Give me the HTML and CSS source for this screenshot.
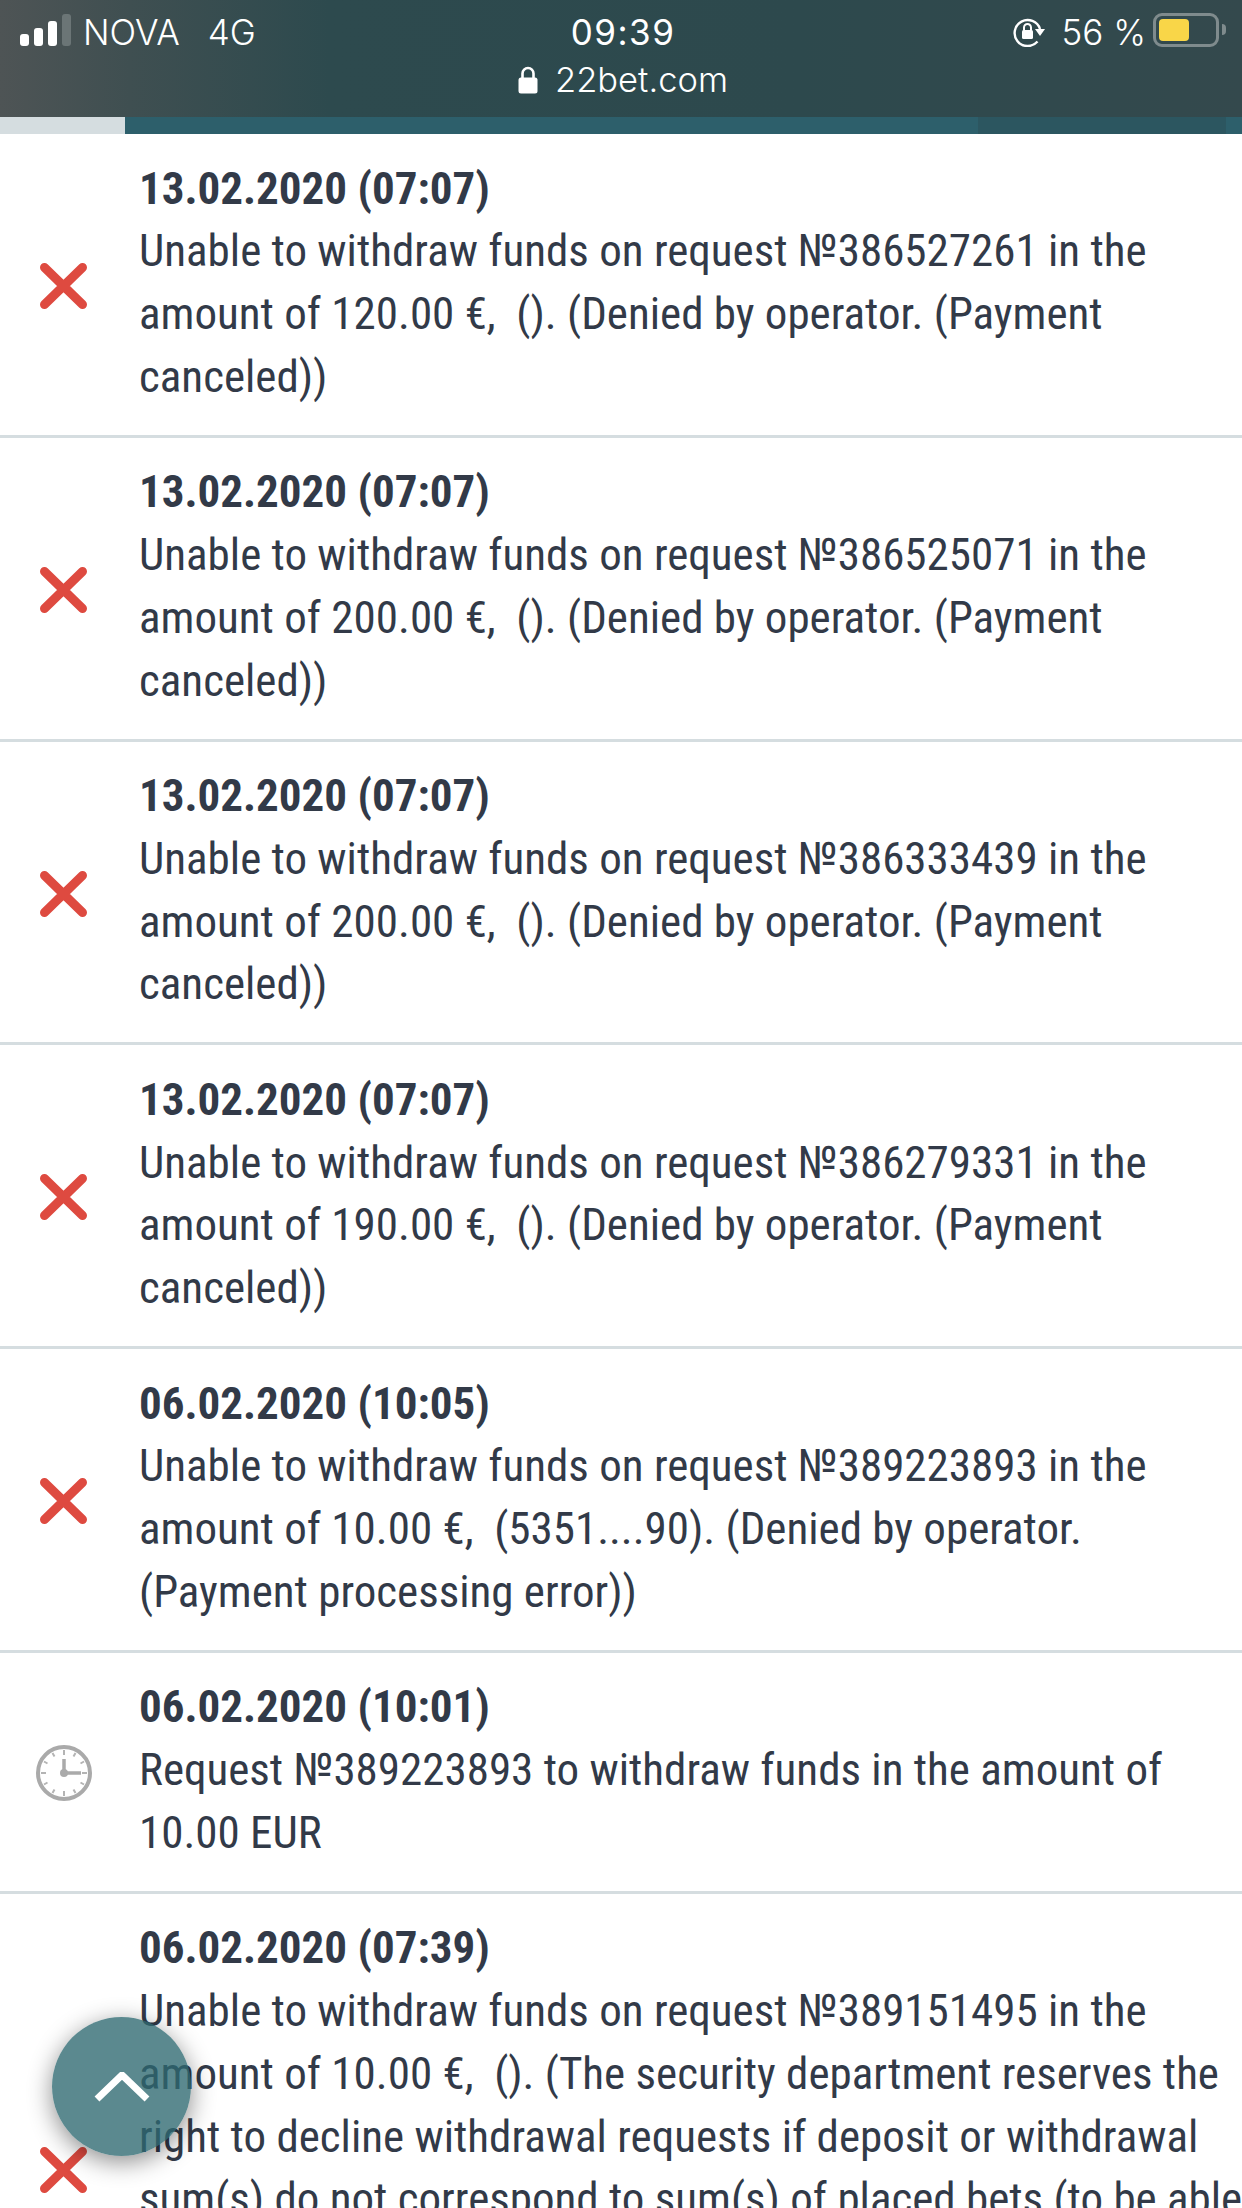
FILE: index.html
```html
<!DOCTYPE html>
<html lang="en">
<head>
    <meta charset="UTF-8">
    <meta name="viewport" content="width=device-width, initial-scale=1.0">
    <title>22bet.com</title>
    <link rel="stylesheet" href="styles.css">
</head>
<body>
    <header class="statusbar">
        <div class="status-left">
            <div class="signal">
                <span class="bar bar1"></span>
                <span class="bar bar2"></span>
                <span class="bar bar3"></span>
                <span class="bar bar4"></span>
            </div>
            <span class="carrier">NOVA</span>
            <span class="network">4G</span>
        </div>
        <div class="status-center">
            <div class="time">09:39</div>
            <div class="url">
                <svg class="url-lock" viewBox="0 0 20 28"><path d="M4.5 13V7.5a5.5 5.5 0 0 1 11 0V13" fill="none" stroke="#fff" stroke-width="2.6"/><rect x="0.5" y="11.5" width="19" height="16" rx="2.5" fill="#fff"/></svg>
                <span>22bet.com</span>
            </div>
        </div>
        <div class="status-right">
            <svg class="rotation" viewBox="0 0 32 30"><path d="M24.5 24.5A13 13 0 1 1 27 12" fill="none" stroke="#fff" stroke-width="2.4"/><path d="M22 12h10l-5 7z" fill="#fff"/><path d="M11 13.500V10.500a3.500 3.500 0 0 1 7 0V13.500" fill="none" stroke="#fff" stroke-width="2"/><rect x="9" y="13" width="11" height="9" rx="1.500" fill="#fff"/></svg>
            <span class="percent">56 %</span>
            <div class="battery"><div class="battery-fill"></div></div>
            <div class="battery-nub"></div>
        </div>
    </header>
    <div class="strip">
        <div class="strip-light"></div>
        <div class="strip-main"></div>
        <div class="strip-dark"></div>
        <div class="strip-end"></div>
    </div>

    <main class="list">
        <div class="row">
            <div class="row-icon"><svg class="icon-x" viewBox="0 0 47 46"><path d="M4.500 4.500l38 37M42.500 4.500l-38 37" /></svg></div>
            <div class="row-text">
                <div class="date">13.02.2020 (07:07)</div>
                <div class="line">Unable to withdraw funds on request №386527261 in the</div>
                <div class="line">amount of 120.00 €,&nbsp; (). (Denied by operator. (Payment</div>
                <div class="line">canceled))</div>
            </div>
        </div>
        <div class="row">
            <div class="row-icon"><svg class="icon-x" viewBox="0 0 47 46"><path d="M4.500 4.500l38 37M42.500 4.500l-38 37" /></svg></div>
            <div class="row-text">
                <div class="date">13.02.2020 (07:07)</div>
                <div class="line">Unable to withdraw funds on request №386525071 in the</div>
                <div class="line">amount of 200.00 €,&nbsp; (). (Denied by operator. (Payment</div>
                <div class="line">canceled))</div>
            </div>
        </div>
        <div class="row">
            <div class="row-icon"><svg class="icon-x" viewBox="0 0 47 46"><path d="M4.500 4.500l38 37M42.500 4.500l-38 37" /></svg></div>
            <div class="row-text">
                <div class="date">13.02.2020 (07:07)</div>
                <div class="line">Unable to withdraw funds on request №386333439 in the</div>
                <div class="line">amount of 200.00 €,&nbsp; (). (Denied by operator. (Payment</div>
                <div class="line">canceled))</div>
            </div>
        </div>
        <div class="row">
            <div class="row-icon"><svg class="icon-x" viewBox="0 0 47 46"><path d="M4.500 4.500l38 37M42.500 4.500l-38 37" /></svg></div>
            <div class="row-text">
                <div class="date">13.02.2020 (07:07)</div>
                <div class="line">Unable to withdraw funds on request №386279331 in the</div>
                <div class="line">amount of 190.00 €,&nbsp; (). (Denied by operator. (Payment</div>
                <div class="line">canceled))</div>
            </div>
        </div>
        <div class="row">
            <div class="row-icon"><svg class="icon-x" viewBox="0 0 47 46"><path d="M4.500 4.500l38 37M42.500 4.500l-38 37" /></svg></div>
            <div class="row-text">
                <div class="date">06.02.2020 (10:05)</div>
                <div class="line">Unable to withdraw funds on request №389223893 in the</div>
                <div class="line">amount of 10.00 €,&nbsp; (5351....90). (Denied by operator.</div>
                <div class="line">(Payment processing error))</div>
            </div>
        </div>
        <div class="row">
            <div class="row-icon">
                <svg class="icon-clock" viewBox="0 0 56 56">
                    <circle cx="28" cy="28" r="26" fill="none" stroke="#aaa" stroke-width="4"/>
                    <path d="M28 5v5M28 46v5M5 28h5M46 28h5M16.500 8l2 3.500M39.500 8l-2 3.500M8 16.500l3.500 2M48 16.500l-3.500 2M8 39.500l3.500-2M48 39.500l-3.500-2M16.500 48l2-3.500M39.500 48l-2-3.500" stroke="#b4b4b4" stroke-width="2"/>
                    <path d="M28 14v14h17" fill="none" stroke="#aaa" stroke-width="3.500"/>
                    <circle cx="28" cy="28" r="4" fill="#aaa"/>
                </svg>
            </div>
            <div class="row-text">
                <div class="date">06.02.2020 (10:01)</div>
                <div class="line">Request №389223893 to withdraw funds in the amount of</div>
                <div class="line">10.00 EUR</div>
            </div>
        </div>
        <div class="row row-long">
            <div class="row-icon"><svg class="icon-x" viewBox="0 0 47 46"><path d="M4.500 4.500l38 37M42.500 4.500l-38 37" /></svg></div>
            <div class="row-text">
                <div class="date">06.02.2020 (07:39)</div>
                <div class="line">Unable to withdraw funds on request №389151495 in the</div>
                <div class="line">amount of 10.00 €,&nbsp; (). (The security department reserves the</div>
                <div class="line">right to decline withdrawal requests if deposit or withdrawal</div>
                <div class="line">sum(s) do not correspond to sum(s) of placed bets (to be able</div>
            </div>
        </div>
    </main>

    <button class="to-top">
        <svg viewBox="0 0 56 30"><path d="M3 27L28 3l25 24" /></svg>
    </button>
</body>
</html>
```

FILE: styles.css
```css
html, body {
    margin: 0;
    height: 2208px;
    overflow: hidden;
    background: #fff;
}
body {
    font-family: Roboto, "Liberation Sans", sans-serif;
    color: #323a48;
}

.statusbar {
    height: 117px;
    box-sizing: border-box;
    padding: 14px 16px 0 20px;
    display: grid;
    grid-template-columns: 1fr auto 1fr;
    background: linear-gradient(90deg, #4e5455 0, #3f4f51 130px, #2d4a4e 330px, #2d494d 800px, #34494d 1242px);
    color: #fff;
    font-family: Inter, "Liberation Sans", sans-serif;
    font-size: 35px;
    font-weight: 300;
    line-height: 36px;
}
.status-left {
    display: flex;
    align-items: flex-start;
}
.signal {
    display: flex;
    align-items: flex-end;
    gap: 5px;
    height: 32px;
    margin-right: 12px;
}
.bar {
    width: 9px;
    background: #fff;
    border-radius: 3px;
}
.bar1 { height: 12px; }
.bar2 { height: 18px; }
.bar3 { height: 25px; }
.bar4 { height: 32px; background: #6b7576; }
.carrier {
    margin-right: 28px;
}
.status-center {
    display: flex;
    flex-direction: column;
    align-items: center;
    gap: 12px;
}
.time {
    font-weight: 400;
    letter-spacing: 1.5px;
}
.url {
    display: flex;
    align-items: center;
    gap: 17px;
    font-size: 34.5px;
}
.url-lock {
    width: 20px;
    height: 28px;
}
.status-right {
    display: flex;
    justify-content: flex-end;
    align-items: flex-start;
}
.rotation {
    width: 32px;
    height: 30px;
    margin: 3px 17px 0 0;
}
.battery {
    width: 66px;
    height: 34px;
    box-sizing: border-box;
    margin: -1px 0 0 7px;
    padding: 3px;
    border: 3px solid #7f8b8d;
    border-radius: 9px;
}
.battery-fill {
    width: 30px;
    height: 22px;
    background: #f9d648;
    border-radius: 4px;
}
.battery-nub {
    width: 4px;
    height: 11px;
    margin: 10px 0 0 3px;
    background: #7f8b8d;
    border-radius: 0 4px 4px 0;
}

.strip {
    height: 17px;
    display: flex;
}
.strip-light { width: 125px; background: #d5dde0; }
.strip-main { width: 853px; background: #2d5f6b; }
.strip-dark { width: 248px; background: #2c5660; }
.strip-end { flex: 1; background: #2d5f6b; }

.row {
    display: flex;
    align-items: center;
    box-sizing: border-box;
    border-bottom: 3px solid #d5dde0;
    padding: 23.5px 0 26.25px;
}
.row-long {
    min-height: 552px;
}
.row-icon {
    width: 139px;
    flex-shrink: 0;
    display: flex;
    padding-left: 36px;
    box-sizing: border-box;
}
.row-text {
    flex: 1;
    font-size: 45px;
    line-height: 62.75px;
    white-space: nowrap;
    font-stretch: 75%;
}
.row-long .row-text {
    align-self: flex-start;
}
.date {
    font-weight: 700;
}
.icon-x {
    width: 47px;
    height: 46px;
    margin: 6px 0 0 4px;
}
.icon-x path {
    fill: none;
    stroke: #de4a40;
    stroke-width: 9;
    stroke-linecap: round;
}
.icon-clock {
    width: 56px;
    height: 56px;
    margin-top: 6px;
}

.to-top {
    position: fixed;
    left: 52px;
    top: 2017px;
    width: 139px;
    height: 139px;
    padding: 0;
    border: 0;
    border-radius: 50%;
    background: rgba(45, 104, 112, 0.78);
    box-shadow: 0 6px 24px rgba(0, 0, 0, 0.45);
    display: flex;
    align-items: center;
    justify-content: center;
}
.to-top svg {
    width: 56px;
    height: 30px;
}
.to-top path {
    fill: none;
    stroke: #fff;
    stroke-width: 7;
}
```
